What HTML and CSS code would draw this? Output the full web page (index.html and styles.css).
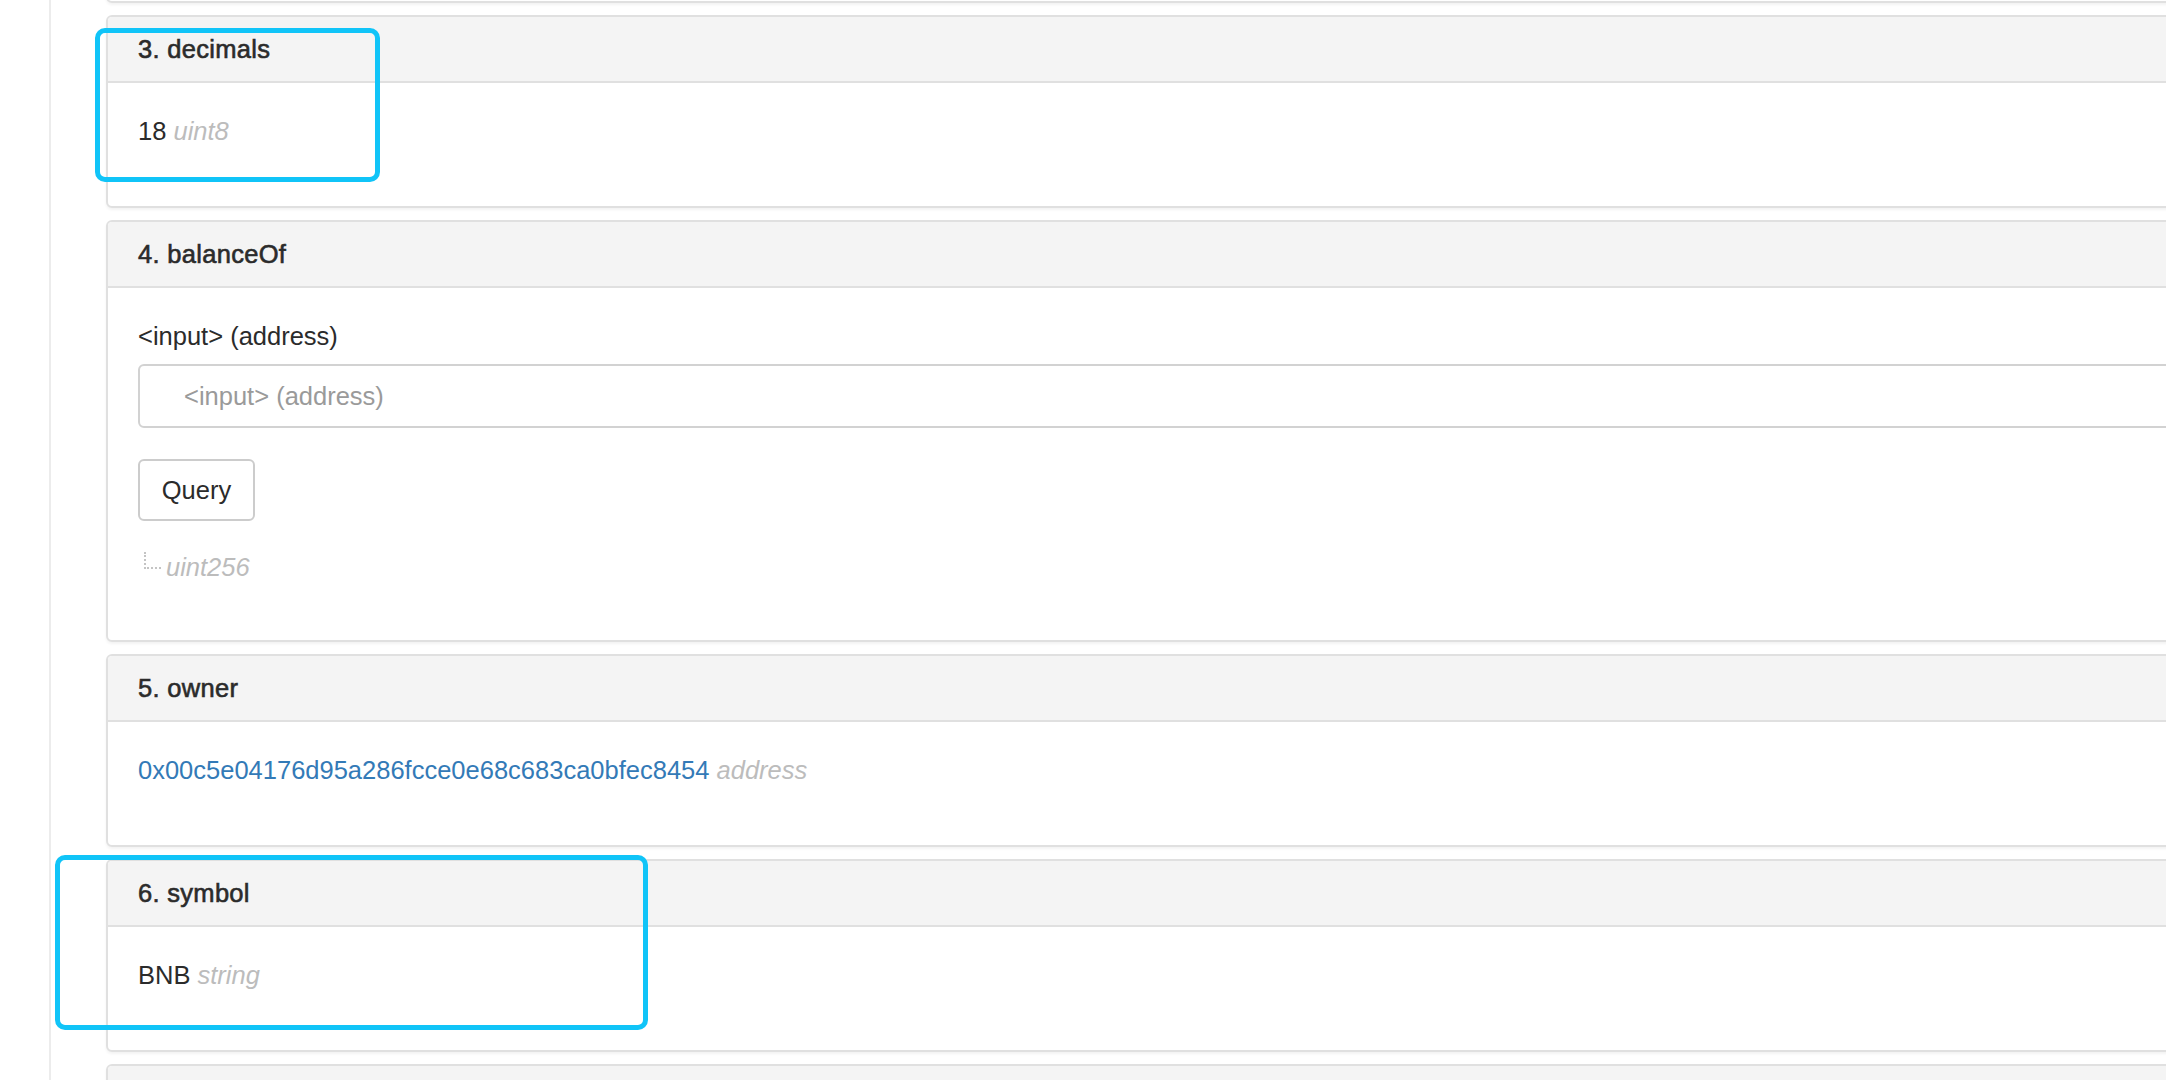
FILE: index.html
```html
<!DOCTYPE html>
<html lang="en">
<head>
<meta charset="utf-8">
<title>Read Contract</title>
<link rel="stylesheet" href="styles.css">
</head>
<body>
<div class="page">
  <div class="rail"></div>
  <main class="panels">
    <section class="panel panel-prev">
      <div class="panel-body"></div>
    </section>

    <section class="panel">
      <header class="panel-heading">3. decimals</header>
      <div class="panel-body">
        <p class="value">18 <i class="type">uint8</i></p>
      </div>
    </section>

    <section class="panel">
      <header class="panel-heading">4. balanceOf</header>
      <div class="panel-body panel-body-form">
        <label class="field-label" for="addr">&lt;input&gt; (address)</label>
        <input class="field-input" id="addr" type="text" placeholder="&lt;input&gt; (address)">
        <button class="btn" type="button">Query</button>
        <p class="result"><span class="tree"></span><i class="type">uint256</i></p>
      </div>
    </section>

    <section class="panel">
      <header class="panel-heading">5. owner</header>
      <div class="panel-body">
        <p class="value"><a class="addr-link" href="#">0x00c5e04176d95a286fcce0e68c683ca0bfec8454</a> <i class="type">address</i></p>
      </div>
    </section>

    <section class="panel">
      <header class="panel-heading">6. symbol</header>
      <div class="panel-body">
        <p class="value">BNB <i class="type">string</i></p>
      </div>
    </section>

    <section class="panel">
      <header class="panel-heading"></header>
      <div class="panel-body"></div>
    </section>
  </main>
</div>
<div class="highlight highlight-decimals"></div>
<div class="highlight highlight-symbol"></div>
</body>
</html>
```

FILE: styles.css
```css
html, body {
  margin: 0;
  padding: 0;
  background: #ffffff;
}

body {
  width: 2166px;
  height: 1080px;
  overflow: hidden;
  position: relative;
  font-family: "Liberation Sans", Arial, Helvetica, sans-serif;
  font-size: 25.5px;
  line-height: 36px;
  color: #2b2b2b;
}

.page {
  display: flex;
  align-items: flex-start;
  height: 1080px;
  overflow: hidden;
}

.rail {
  width: 49px;
  height: 1080px;
  border-right: 2px solid #ececec;
  flex: none;
}

.panels {
  margin-left: 55px;
  margin-top: -95px;
  width: 2120px;
  flex: none;
  display: flex;
  flex-direction: column;
  gap: 12px;
}

.panel {
  background: #ffffff;
  border: 2px solid #e0e0e0;
  border-radius: 6px;
  box-shadow: 0 2px 3px rgba(0, 0, 0, 0.05);
  overflow: hidden;
}

.panel-prev .panel-body {
  height: 94px;
  box-sizing: border-box;
}

.panel-heading {
  height: 66px;
  box-sizing: border-box;
  padding: 0 30px;
  display: flex;
  align-items: center;
  background: #f4f4f4;
  border-bottom: 2px solid #e0e0e0;
  font-weight: 400;
  font-size: 25.5px;
  letter-spacing: 0.3px;
  -webkit-text-stroke: 0.6px #2b2b2b;
  color: #2b2b2b;
}

.panel-body {
  padding: 30px 30px 0;
  height: 123px;
  box-sizing: border-box;
}

.value {
  margin: 0;
}

.type {
  color: #bcbcbc;
  font-style: italic;
}

.addr-link {
  color: #337ab7;
  text-decoration: none;
}

.panel-body-form {
  height: 352px;
  display: flex;
  flex-direction: column;
  align-items: flex-start;
}

.field-label {
  display: block;
}

.field-input {
  margin-top: 10px;
  width: 100%;
  height: 64px;
  box-sizing: border-box;
  border: 2px solid #d2d2d2;
  border-radius: 6px;
  padding: 0 20px 0 44px;
  font-family: inherit;
  font-size: 25.5px;
  color: #555;
  background: #fff;
  outline: none;
}

.field-input::placeholder {
  color: #9a9a9a;
}

.btn {
  margin-top: 31px;
  width: 117px;
  height: 62px;
  border: 2px solid #cccccc;
  border-radius: 6px;
  background: #ffffff;
  font-family: inherit;
  font-size: 25.5px;
  color: #2b2b2b;
  padding: 0;
}

.result {
  margin: 28px 0 0;
  display: flex;
  align-items: center;
}

.tree {
  display: inline-block;
  width: 17px;
  height: 17px;
  margin: -14px 5px 0 6px;
  border-left: 2px dotted #c4c4c4;
  border-bottom: 2px dotted #c4c4c4;
  box-sizing: border-box;
}

.highlight {
  position: absolute;
  border: 5px solid #10c4f8;
  border-radius: 10px;
  box-sizing: border-box;
  pointer-events: none;
}

.highlight-decimals {
  left: 95px;
  top: 28px;
  width: 285px;
  height: 154px;
}

.highlight-symbol {
  left: 55px;
  top: 855px;
  width: 593px;
  height: 175px;
}
```
